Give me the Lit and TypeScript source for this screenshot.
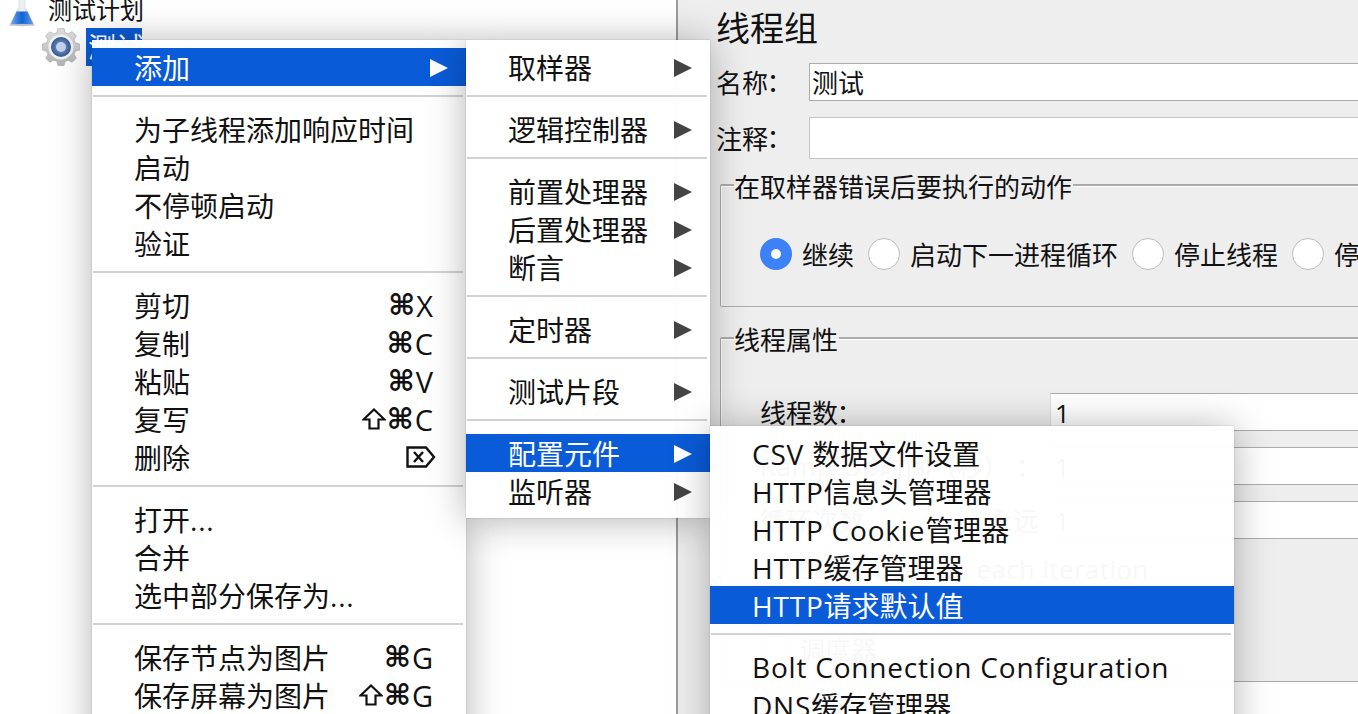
import { LitElement, html, css, svg, nothing, type TemplateResult } from 'lit';
import { customElement } from 'lit/decorators.js';

interface MenuEntry {
  label?: string;
  sub?: boolean;
  on?: boolean;
  keys?: string;
  shift?: boolean;
  del?: boolean;
}

const SEP: MenuEntry = {};

const mainMenu: MenuEntry[] = [
  { label: '添加', sub: true, on: true },
  SEP,
  { label: '为子线程添加响应时间' },
  { label: '启动' },
  { label: '不停顿启动' },
  { label: '验证' },
  SEP,
  { label: '剪切', keys: 'X' },
  { label: '复制', keys: 'C' },
  { label: '粘贴', keys: 'V' },
  { label: '复写', keys: 'C', shift: true },
  { label: '删除', del: true },
  SEP,
  { label: '打开...' },
  { label: '合并' },
  { label: '选中部分保存为...' },
  SEP,
  { label: '保存节点为图片', keys: 'G' },
  { label: '保存屏幕为图片', keys: 'G', shift: true },
];

const addMenu: MenuEntry[] = [
  { label: '取样器', sub: true },
  SEP,
  { label: '逻辑控制器', sub: true },
  SEP,
  { label: '前置处理器', sub: true },
  { label: '后置处理器', sub: true },
  { label: '断言', sub: true },
  SEP,
  { label: '定时器', sub: true },
  SEP,
  { label: '测试片段', sub: true },
  SEP,
  { label: '配置元件', sub: true, on: true },
  { label: '监听器', sub: true },
];

const configMenu: MenuEntry[] = [
  { label: 'CSV 数据文件设置' },
  { label: 'HTTP信息头管理器' },
  { label: 'HTTP Cookie管理器' },
  { label: 'HTTP缓存管理器' },
  { label: 'HTTP请求默认值', on: true },
  SEP,
  { label: 'Bolt Connection Configuration' },
  { label: 'DNS缓存管理器' },
];

// gear outline, computed instead of hand written
function gearPath(cx: number, cy: number, outer: number, inner: number, teeth: number): string {
  const step = (Math.PI * 2) / teeth;
  const pts: string[] = [];
  for (let i = 0; i < teeth; i++) {
    const a = i * step;
    const at = (r: number, t: number) =>
      `${(cx + r * Math.cos(a + t * step)).toFixed(2)} ${(cy + r * Math.sin(a + t * step)).toFixed(2)}`;
    pts.push(at(inner, -0.36), at(outer, -0.2), at(outer, 0.2), at(inner, 0.36));
  }
  return 'M' + pts.join('L') + 'Z';
}

// latin runs are a bit wider in the original font
function spaced(text: string): TemplateResult[] {
  return text
    .split(/([A-Za-z0-9 .-]+)/)
    .filter(Boolean)
    .map(part => (/^[A-Za-z0-9 .-]+$/.test(part) ? html`<span class="lat">${part}</span>` : html`${part}`));
}

@customElement('app-root')
export class AppRoot extends LitElement {
  private _flask() {
    return html`<svg class="flask" viewBox="0 0 28 30" width="28" height="30">
      <defs>
        <linearGradient id="liq" x1="0" y1="0" x2="1" y2="0">
          <stop offset="0" stop-color="#6ea6ea" />
          <stop offset=".5" stop-color="#0f62d6" />
          <stop offset="1" stop-color="#5f9ae4" />
        </linearGradient>
        <linearGradient id="glass" x1="0" y1="0" x2="1" y2="0">
          <stop offset="0" stop-color="#b9bec8" />
          <stop offset=".5" stop-color="#f1f3f6" />
          <stop offset="1" stop-color="#b9bec8" />
        </linearGradient>
      </defs>
      <path d="M10.500 0h7v10l8 16q1 2-1 2H3.500q-2 0-1-2l8-16z" fill="url(#glass)" />
      <path d="M8.500 14.500h11l5.500 12.500H3z" fill="url(#liq)" />
      <ellipse cx="14" cy="28" rx="13.500" ry="1.200" fill="#aab0ba" opacity=".7" />
    </svg>`;
  }

  private _gear() {
    return html`<svg class="gear" viewBox="0 0 38 38" width="38" height="38">
      <defs>
        <linearGradient id="steel" x1="0" y1="0" x2="0" y2="1">
          <stop offset="0" stop-color="#dedede" />
          <stop offset="1" stop-color="#b4b4b4" />
        </linearGradient>
        <radialGradient id="hub">
          <stop offset="0" stop-color="#aebfe0" />
          <stop offset=".5" stop-color="#5f80b8" />
          <stop offset="1" stop-color="#35578f" />
        </radialGradient>
      </defs>
      ${svg`<path d=${gearPath(19, 19, 19, 15, 8)} fill="url(#steel)" stroke="#a8a8a8" stroke-width=".6" />`}
      <circle cx="19" cy="19" r="12.500" fill="#f0f1f3" />
      <circle cx="19" cy="19" r="10" fill="url(#hub)" />
      <circle cx="19" cy="19" r="5" fill="#c5d3ea" />
    </svg>`;
  }

  private _shiftIcon(): TemplateResult {
    return html`<svg class="shift" viewBox="0 0 24 22" width="24" height="22">
      <path d="M12 1.500 22.500 11.500h-6V20.500h-9V11.500h-6z" fill="none" stroke="#111" stroke-width="2.200" />
    </svg>`;
  }

  private _deleteIcon(): TemplateResult {
    return html`<svg class="del" viewBox="0 0 30 22" width="30" height="22">
      <path d="M1.500 1.500H20L28 11l-8 9.500H1.500z" fill="none" stroke="#111" stroke-width="2.400" />
      <path d="M8 6l9 10M17 6l-9 10" fill="none" stroke="#111" stroke-width="2.400" />
    </svg>`;
  }

  private _renderEntry(e: MenuEntry): TemplateResult {
    if (!e.label) return html`<div class="sep"></div>`;
    return html`
      <div class="item ${e.on ? 'on' : ''}">
        <span class="label">${spaced(e.label)}</span>
        ${e.sub ? html`<span class="arrow"></span>` : nothing}
        ${e.keys || e.del
          ? html`<span class="keys">
              ${e.shift ? this._shiftIcon() : nothing}
              ${e.keys ? html`<span class="cmd">⌘</span><span>${e.keys}</span>` : nothing}
              ${e.del ? this._deleteIcon() : nothing}
            </span>`
          : nothing}
      </div>
    `;
  }

  private _renderMenu(cls: string, entries: MenuEntry[]): TemplateResult {
    return html`<div class="menu ${cls}">${entries.map(e => this._renderEntry(e))}</div>`;
  }

  private _renderTree(): TemplateResult {
    return html`
      <div class="tree">
        <div class="node plan">${this._flask()}<span>测试计划</span></div>
        <div class="node group-node">${this._gear()}<span class="selected">测试</span></div>
      </div>
    `;
  }

  private _renderRadio(text: string, on = false): TemplateResult {
    return html`<span class="radio-wrap"><span class="radio ${on ? 'checked' : ''}"></span>${text}</span>`;
  }

  private _renderPanel(): TemplateResult {
    return html`
      <div class="panel">
        <div class="title">线程组</div>
        <div class="row name-row"><label>名称<span class="colon tight">：</span></label><div class="input">测试</div></div>
        <div class="row comment-row"><label>注释<span class="colon tight">：</span></label><div class="input tall"></div></div>

        <fieldset class="box action">
          <legend>在取样器错误后要执行的动作</legend>
          <div class="radios">
            ${this._renderRadio('继续', true)}
            ${this._renderRadio('启动下一进程循环')}
            ${this._renderRadio('停止线程')}
            ${this._renderRadio('停止测试')}
            ${this._renderRadio('立即停止测试')}
          </div>
        </fieldset>

        <fieldset class="box props">
          <legend>线程属性</legend>
          <div class="field"><label>线程数<span class="colon tight">：</span></label><div class="input num">1</div></div>
          <div class="field"><label>${spaced('Ramp-Up')}时间（秒）<span class="colon">：</span></label><div class="input num">1</div></div>
          <div class="field">
            <label class="loop">循环次数<span class="check small"></span><span class="forever">永远</span></label>
            <div class="input num">1</div>
          </div>
          <div class="opt first"><span class="check"></span><span>${spaced('Same user on each iteration')}</span></div>
          <div class="opt"><span class="check"></span>延迟创建线程直到需要</div>
          <div class="opt"><span class="check"></span>调度器</div>
        </fieldset>
        <div class="rest">持续时间（秒）</div>
      </div>
    `;
  }

  override render() {
    return html`
      ${this._renderTree()}
      <div class="divider"></div>
      ${this._renderPanel()}
      ${this._renderMenu('m1', mainMenu)}
      ${this._renderMenu('m2', addMenu)}
      ${this._renderMenu('m3', configMenu)}
    `;
  }

  static override styles = css`
    :host {
      display: flex;
      position: relative;
      width: 1358px;
      height: 714px;
      overflow: hidden;
      background: #fff;
      color: #111;
      font-family: 'Open Sans', 'Noto Sans CJK SC', sans-serif;
      font-size: 26px;
    }
    .lat {
      letter-spacing: 0.8px;
    }
    .opt .lat {
      letter-spacing: 0.36px;
    }

    /* Tree */
    .tree {
      width: 676px;
      flex: none;
      margin-top: -11px;
    }
    .node {
      display: flex;
      align-items: center;
      height: 38px;
    }
    .plan {
      font-size: 24px;
      padding-left: 8px;
      gap: 12px;
    }
    .flask {
      align-self: flex-end;
      filter: blur(0.4px);
    }
    .gear {
      filter: blur(0.4px);
    }
    .group-node {
      padding-left: 42px;
      gap: 6px;
      margin-top: 1px;
    }
    .selected {
      background: #0a5bd8;
      color: #fff;
      font-size: 28px;
      line-height: 38px;
      width: 54px;
      padding-left: 2px;
      white-space: nowrap;
    }

    .divider {
      width: 2px;
      flex: none;
      background: #9b9b9b;
    }

    /* Right panel */
    .panel {
      width: 680px;
      flex: none;
      background: #eee;
      padding-left: 38px;
      box-sizing: border-box;
      overflow: hidden;
      display: flex;
      flex-direction: column;
    }
    .panel > * {
      flex: none;
    }
    .title {
      font-size: 34px;
      line-height: 38px;
      height: 63px;
      padding-top: 9px;
      box-sizing: border-box;
    }
    .row {
      display: flex;
      align-items: center;
      width: 700px;
    }
    .row label {
      width: 93px;
      flex: none;
    }
    .colon {
      font-family: 'Noto Sans CJK TC', sans-serif;
    }
    .colon.tight {
      margin-left: -8px;
    }
    .input {
      flex: 1;
      height: 38px;
      line-height: 38px;
      box-sizing: border-box;
      background: #fff;
      border: 1px solid #acacac;
      padding-left: 2px;
      font-size: 26px;
    }
    .input.tall {
      height: 42px;
      border-color: #c4c4c4;
    }
    .comment-row {
      margin-top: 16px;
    }

    .box {
      margin: 0 0 0 4px;
      padding: 0 0 0 39px;
      width: 660px;
      box-sizing: border-box;
      border: 1px solid #ababab;
      border-width: 2px 2px 1px 1px;
      border-radius: 2px;
      min-inline-size: 0;
      box-shadow: inset 1px 1px 0 #fff;
    }
    legend {
      margin-left: -26px;
      padding: 5px 1px 0 0;
      line-height: 30px;
      font-size: 26px;
    }
    .action {
      margin-top: 8px;
      height: 140px;
    }
    .radios {
      display: flex;
      align-items: center;
      white-space: nowrap;
      height: 32px;
      margin-top: 36px;
    }
    .radio-wrap {
      display: inline-flex;
      align-items: center;
      gap: 10px;
      margin-right: 14px;
      flex: none;
    }
    .radio {
      width: 32px;
      height: 32px;
      border-radius: 50%;
      box-sizing: border-box;
      background: #fff;
      border: 1px solid #bcbcbc;
      flex: none;
    }
    .radio.checked {
      border: 11px solid #3c82f6;
    }

    .props {
      margin-top: 13px;
      height: 362px;
    }
    .field {
      display: flex;
      width: 640px;
      align-items: center;
      height: 38px;
      margin-bottom: 16px;
    }
    .field:first-of-type {
      margin-top: 38px;
    }
    .field label {
      width: 290px;
      flex: none;
      display: flex;
      align-items: center;
      white-space: nowrap;
    }
    .num {
      height: 38px;
      border-left-color: #ddd;
      padding-left: 4px;
    }
    .check {
      width: 27px;
      height: 27px;
      border-radius: 5px;
      background: #fff;
      border: 1px solid #bcbcbc;
      box-sizing: border-box;
      flex: none;
    }
    .check.small {
      margin-left: 84px;
    }
    .forever {
      margin-left: 12px;
    }
    .opt {
      display: flex;
      align-items: center;
      gap: 12px;
      height: 40px;
      white-space: nowrap;
    }
    .opt.first {
      margin-top: -6px;
    }
    .panel > .rest {
      flex: 1;
      min-height: 0;
      margin-left: 4px;
      background: #fff;
      padding: 8px 0 0 39px;
    }

    /* Popup menus, translucent like the native ones */
    .menu {
      position: absolute;
      box-sizing: border-box;
      background: rgba(255, 255, 255, 0.97);
      box-shadow: 0 2px 36px rgba(0, 0, 0, 0.3), 0 0 1px rgba(0, 0, 0, 0.35);
      padding-top: 8px;
      font-size: 28px;
    }
    .m1 {
      left: 92px;
      top: 40px;
      width: 374px;
      padding-bottom: 40px;
    }
    .m2 {
      left: 466px;
      top: 40px;
      width: 244px;
      padding-bottom: 8px;
    }
    .m3 {
      left: 710px;
      top: 426px;
      width: 524px;
      padding-bottom: 40px;
    }
    .item {
      display: flex;
      align-items: center;
      height: 38px;
      padding-left: 42px;
      box-sizing: border-box;
      white-space: nowrap;
      position: relative;
    }
    .item.on {
      background: rgba(0, 84, 214, 0.96);
      color: #fff;
    }
    .sep {
      height: 2px;
      margin: 9px 3px 13px 1px;
      background: #d2d2d2;
    }
    .arrow {
      margin-left: auto;
      margin-right: 18px;
      margin-top: 1px;
      width: 0;
      height: 0;
      border-left: 18px solid #444;
      border-top: 9.5px solid transparent;
      border-bottom: 9.5px solid transparent;
    }
    .on .arrow {
      border-left-color: #fff;
    }
    .keys {
      margin-left: auto;
      margin-right: 33px;
      display: flex;
      align-items: center;
      gap: 1px;
      font-size: 29px;
    }
    .cmd {
      font-family: 'DejaVu Sans', sans-serif;
      font-weight: 700;
      font-size: 29px;
    }
    .del {
      margin-right: -3px;
    }
    .flask,
    .gear {
      flex: none;
    }
  `;
}
